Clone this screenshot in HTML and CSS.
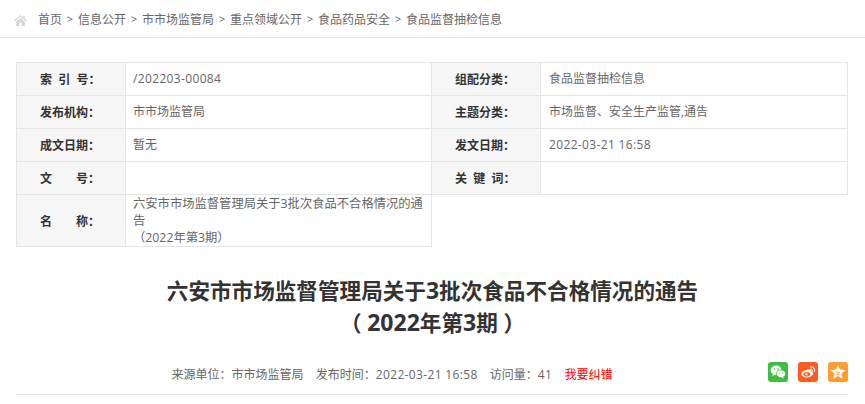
FILE: index.html
```html
<!DOCTYPE html>
<html lang="zh-CN">

<head>
    <meta charset="UTF-8">
    <title>食品监督抽检信息</title>
    <link rel="stylesheet" href="styles.css">
</head>

<body>

    <div class="crumbs">
        <svg class="home-icon" viewBox="0 0 13 11" width="13" height="11">
            <path d="M6.5 0 L0 5.4 L1 6.2 L6.5 1.7 L12 6.2 L13 5.4 L10.8 3.6 V0.6 H9.2 V2.3 Z" fill="#d6d6d6" />
            <path d="M2.2 6.4 L6.5 2.9 L10.8 6.4 V11 H7.8 V7.6 H5.2 V11 H2.2 Z" fill="#d6d6d6" />
        </svg>
        <a class="crumb">首页</a><span class="sep">&gt;</span>
        <a class="crumb">信息公开</a><span class="sep">&gt;</span>
        <a class="crumb">市市场监管局</a><span class="sep">&gt;</span>
        <a class="crumb">重点领域公开</a><span class="sep">&gt;</span>
        <a class="crumb">食品药品安全</a><span class="sep">&gt;</span>
        <a class="crumb">食品监督抽检信息</a>
    </div>

    <div class="info-table">
        <div class="info-row">
            <div class="info-label">索&nbsp;&nbsp;引&nbsp;&nbsp;号：</div>
            <div class="info-value"><span class="num">/202203-00084</span></div>
        </div>
        <div class="info-row">
            <div class="info-label">组配分类：</div>
            <div class="info-value">食品监督抽检信息</div>
        </div>
        <div class="info-row">
            <div class="info-label">发布机构：</div>
            <div class="info-value">市市场监管局</div>
        </div>
        <div class="info-row">
            <div class="info-label">主题分类：</div>
            <div class="info-value">市场监督、安全生产监管,通告</div>
        </div>
        <div class="info-row">
            <div class="info-label">成文日期：</div>
            <div class="info-value">暂无</div>
        </div>
        <div class="info-row">
            <div class="info-label">发文日期：</div>
            <div class="info-value"><span class="num">2022-03-21 16:58</span></div>
        </div>
        <div class="info-row">
            <div class="info-label">文&emsp;&emsp;号：</div>
            <div class="info-value"></div>
        </div>
        <div class="info-row">
            <div class="info-label">关&nbsp;&nbsp;键&nbsp;&nbsp;词：</div>
            <div class="info-value"></div>
        </div>
        <div class="info-row info-row-tall">
            <div class="info-label">名&emsp;&emsp;称：</div>
            <div class="info-value info-value-name">六安市市场监督管理局关于3批次食品不合格情况的通告<br>（2022年第3期）</div>
        </div>
    </div>

    <h1 class="doc-title">六安市市场监督管理局关于<span class="num">3</span>批次食品不合格情况的通告<br>（ <span class="num">2022</span>年第<span class="num">3</span>期 ）</h1>

    <div class="doc-meta">
        <div class="meta-text">
            <span class="meta-item">来源单位：市市场监管局</span>
            <span class="meta-item">发布时间：<span class="num">2022-03-21 16:58</span></span>
            <span class="meta-item">访问量：<span class="num">41</span></span>
            <a class="report-link">我要纠错</a>
        </div>
        <div class="share">
            <span class="share-btn share-wechat">
                <svg viewBox="0 0 20 20" width="20" height="20">
                    <ellipse cx="8.2" cy="8.2" rx="5.6" ry="4.7" fill="#fff" />
                    <path d="M5 11.5 L4.4 14 L7.4 12.4 Z" fill="#fff" />
                    <ellipse cx="13" cy="11.8" rx="4.6" ry="3.9" fill="#fff" stroke="#3fbf3f" stroke-width="0.8" />
                    <path d="M15 14.8 L15.8 16.4 L13.4 15.4 Z" fill="#fff" />
                    <circle cx="6.3" cy="7" r="0.8" fill="#3fbf3f" />
                    <circle cx="10" cy="7" r="0.8" fill="#3fbf3f" />
                    <circle cx="11.4" cy="11" r="0.6" fill="#3fbf3f" />
                    <circle cx="14.6" cy="11" r="0.6" fill="#3fbf3f" />
                </svg>
            </span>
            <span class="share-btn share-weibo">
                <svg viewBox="0 0 20 20" width="20" height="20">
                    <path d="M8.6 8 C11.8 6.6 14 7.4 13.4 9.6 C15.2 10.2 15.6 11.4 14.6 12.8 C13.2 14.8 10.2 15.8 7.4 15.4 C4.8 15 3 13.6 3.2 11.8 C3.4 10.4 5.8 8.4 8.6 8 Z" fill="#fff" />
                    <ellipse cx="8.8" cy="12.2" rx="3.4" ry="2.3" fill="#ff5a1f" />
                    <circle cx="8.4" cy="12.3" r="1.2" fill="#fff" />
                    <path d="M12.4 4.8 C15 4.4 17.2 6.6 16.4 9.4" fill="none" stroke="#fff" stroke-width="1.2" stroke-linecap="round" />
                    <path d="M12.8 6.9 C14 6.8 14.8 7.8 14.4 8.9" fill="none" stroke="#fff" stroke-width="1" stroke-linecap="round" />
                </svg>
            </span>
            <span class="share-btn share-fav">
                <svg viewBox="0 0 20 20" width="20" height="20">
                    <path d="M10 3 L12.2 7.6 L17.2 8.2 L13.5 11.6 L14.5 16.6 L10 14.1 L5.5 16.6 L6.5 11.6 L2.8 8.2 L7.8 7.6 Z" fill="#fff" />
                    <path d="M8.2 10.2 H11.8 L8.6 12.8 H12" fill="none" stroke="#ff9d2e" stroke-width="0.9" />
                </svg>
            </span>
        </div>
    </div>

</body>

</html>
```

FILE: styles.css
```css
body {
    font-family: "Open Sans", "Noto Sans CJK SC", sans-serif;
    font-size: 12px;
    color: #666;
    background-color: #fff;
    margin: 0;
    padding: 0;
}

.num {
    letter-spacing: 0.35px;
}

.crumbs {
    display: flex;
    align-items: center;
    height: 37px;
    padding-left: 14px;
    border-bottom: 1px solid #e5e5e5;
    color: #666;
}

.home-icon {
    margin: 3px 11px 0 0;
}

.sep {
    width: 16px;
    text-align: center;
    font-size: 11px;
}

.info-table {
    display: grid;
    grid-template-columns: 415px 416px;
    margin: 24px 17px 0 16px;
    border-top: 1px solid #e5e5e5;
    border-left: 1px solid #e5e5e5;
}

.info-row {
    display: flex;
    height: 32px;
    border-bottom: 1px solid #e5e5e5;
    border-right: 1px solid #e5e5e5;
}

.info-row-tall {
    height: 51px;
}

.info-label {
    display: flex;
    align-items: center;
    flex: 0 0 85px;
    padding-left: 23px;
    background-color: #f6f6f6;
    border-right: 1px solid #e5e5e5;
    font-weight: bold;
    color: #333;
    white-space: pre;
}

.info-value {
    flex: 1;
    padding: 0 7px;
    line-height: 31px;
}

.info-row:nth-child(even) .info-value {
    padding-left: 8px;
}

.info-value-name {
    font-size: 12.3px;
    line-height: 17px;
}

.doc-title {
    margin: 28px 0 0;
    height: 65px;
    font-size: 21.6px;
    line-height: 32px;
    font-weight: bold;
    text-align: center;
    color: #333;
}

.doc-title .num {
    font-size: 23px;
    line-height: 1;
    letter-spacing: 0;
}

.doc-meta {
    display: flex;
    align-items: flex-start;
    margin: 22px 17px 0 16px;
    height: 32px;
    border-bottom: 1px solid #e5e5e5;
}

.meta-text {
    flex: 1;
    text-align: center;
    line-height: 26px;
}

.meta-item {
    margin-right: 9px;
}

.report-link {
    color: #f00;
}

.share {
    display: flex;
    gap: 10px;
}

.share-btn {
    display: block;
    width: 20px;
    height: 20px;
    border-radius: 3px;
}

.share-wechat {
    background-color: #3fbf3f;
}

.share-weibo {
    background-color: #ff5a1f;
}

.share-fav {
    background-color: #ff9d2e;
}
```
